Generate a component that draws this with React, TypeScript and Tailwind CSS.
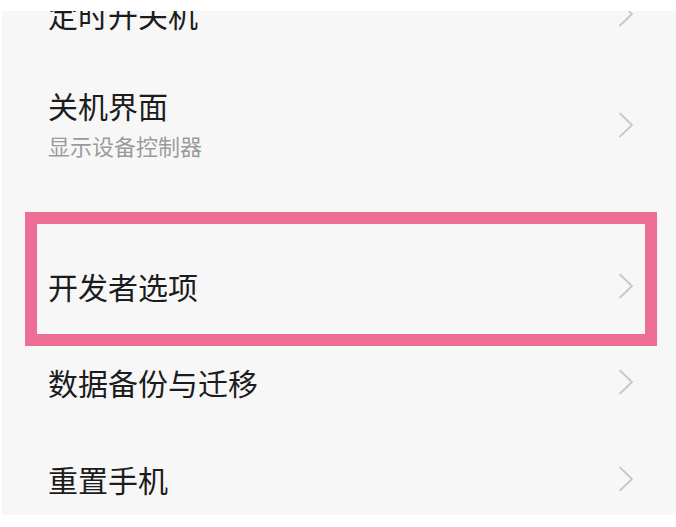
import React from "react";

function Chevron() {
  return (
    <svg width="16" height="26" viewBox="0 0 16 26" className="shrink-0">
      <path d="M2 1.5 L14 13 L2 24.5" fill="none" stroke="#c8c8c8" strokeWidth="1.8" strokeLinecap="round" strokeLinejoin="round" />
    </svg>
  );
}

export default function App() {
  const font = { fontFamily: '"Noto Sans CJK SC", "Noto Sans", sans-serif' };
  return (
    <div className="w-[676px] h-[527px] bg-white pt-[11px] pl-[2px]" style={font}>
      <div className="h-[504px] bg-[#f7f7f7] overflow-hidden flex flex-col">
        <div className="h-[80px] mt-[-37px] shrink-0 flex items-center justify-between pl-[46px] pr-[42px]">
          <span className="text-[30px] leading-[36px] text-[#1c1c1c]">定时开关机</span>
          <Chevron />
        </div>
        <div className="h-[145px] shrink-0 flex items-center justify-between pl-[46px] pr-[42px] pb-[8px]">
          <div className="flex flex-col">
            <span className="text-[30px] leading-[36px] text-[#1c1c1c]">关机界面</span>
            <span className="text-[22px] leading-[28px] mt-[8px] text-[#9b9b9b]">显示设备控制器</span>
          </div>
          <div className="mb-[-4px]">
            <Chevron />
          </div>
        </div>
        <div className="h-[13px] shrink-0" />
        <div className="ml-[23px] w-[632px] h-[134px] shrink-0 border-[12px] border-[#ec6e95] flex items-center justify-between pt-[14px] pl-[11px] pr-[11px]">
          <span className="text-[30px] leading-[36px] text-[#1c1c1c]">开发者选项</span>
          <Chevron />
        </div>
        <div className="h-[72px] shrink-0 flex items-center justify-between pl-[46px] pr-[42px]">
          <span className="text-[30px] leading-[36px] text-[#1c1c1c]">数据备份与迁移</span>
          <Chevron />
        </div>
        <div className="h-[122px] shrink-0 flex items-center justify-between pl-[46px] pr-[42px]">
          <span className="text-[30px] leading-[36px] text-[#1c1c1c]">重置手机</span>
          <Chevron />
        </div>
      </div>
    </div>
  );
}
